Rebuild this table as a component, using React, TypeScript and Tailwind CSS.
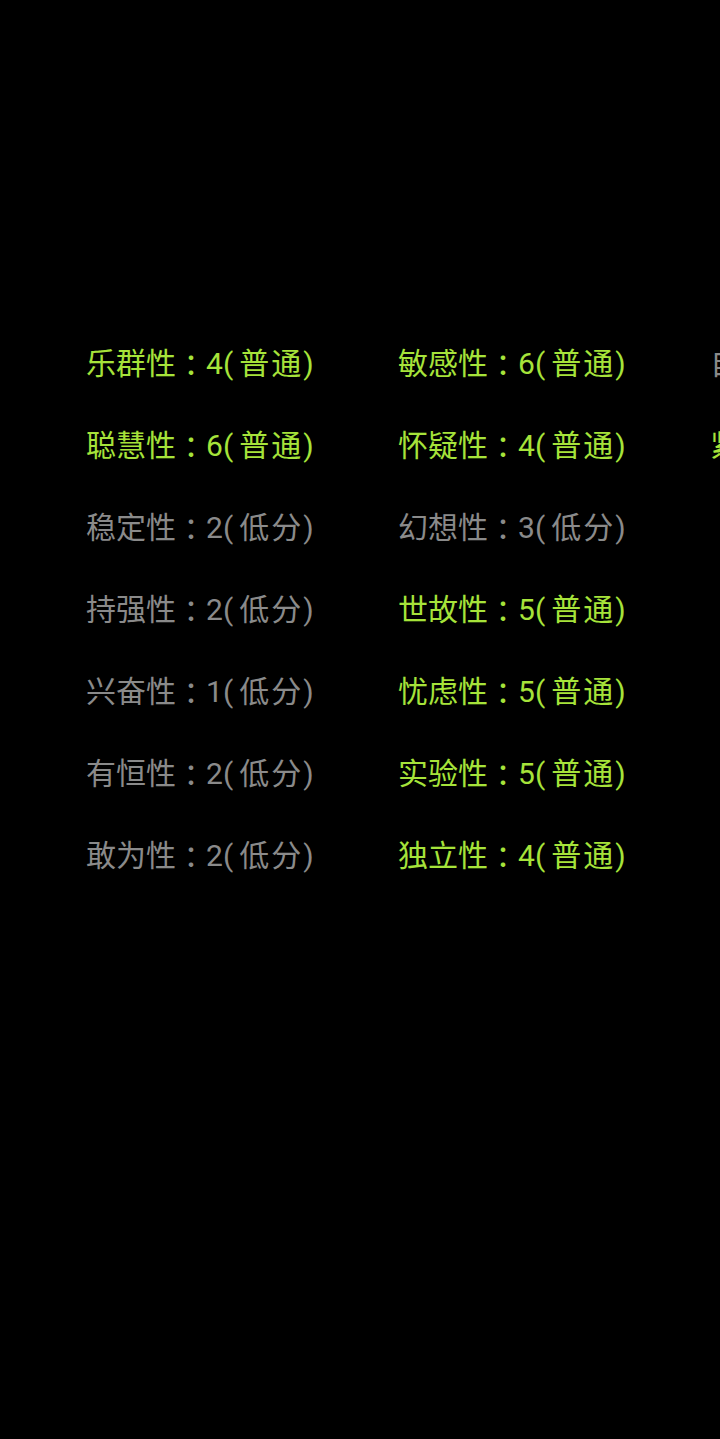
import React from "react";

type Item = { name: string; score: number; level: string };

const col1: Item[] = [
  { name: "乐群性", score: 4, level: "普通" },
  { name: "聪慧性", score: 6, level: "普通" },
  { name: "稳定性", score: 2, level: "低分" },
  { name: "持强性", score: 2, level: "低分" },
  { name: "兴奋性", score: 1, level: "低分" },
  { name: "有恒性", score: 2, level: "低分" },
  { name: "敢为性", score: 2, level: "低分" },
];
const col2: Item[] = [
  { name: "敏感性", score: 6, level: "普通" },
  { name: "怀疑性", score: 4, level: "普通" },
  { name: "幻想性", score: 3, level: "低分" },
  { name: "世故性", score: 5, level: "普通" },
  { name: "忧虑性", score: 5, level: "普通" },
  { name: "实验性", score: 5, level: "普通" },
  { name: "独立性", score: 4, level: "普通" },
];
const col3: Item[] = [
  { name: "自律性", score: 3, level: "低分" },
  { name: "紧张性", score: 5, level: "普通" },
];

function Row({ item }: { item: Item }) {
  const low = item.level === "低分";
  return (
    <div
      className={
        "h-[82px] flex items-center whitespace-nowrap text-[30px] " +
        (low ? "text-[#8a8a8a]" : "text-[#a6e33a]")
      }
    >
      <span>{item.name}</span>
      <span className="font-['Noto_Sans_CJK_JP',sans-serif]">：</span>
      <span>{item.score}</span>
      <span className="mr-[6px]">(</span>
      <span className="tracking-[2px]">{item.level}</span>
      <span>)</span>
    </div>
  );
}

function Column({ items }: { items: Item[] }) {
  return (
    <div className="w-[312px] shrink-0 flex flex-col">
      {items.map((it) => (
        <Row key={it.name} item={it} />
      ))}
    </div>
  );
}

export default function App() {
  return (
    <div
      className="w-[720px] h-[1439px] bg-black overflow-hidden"
      style={{ fontFamily: 'Roboto, "Noto Sans CJK SC", sans-serif' }}
    >
      <div className="flex pl-[86px] pt-[322px]">
        <Column items={col1} />
        <Column items={col2} />
        <Column items={col3} />
      </div>
    </div>
  );
}
